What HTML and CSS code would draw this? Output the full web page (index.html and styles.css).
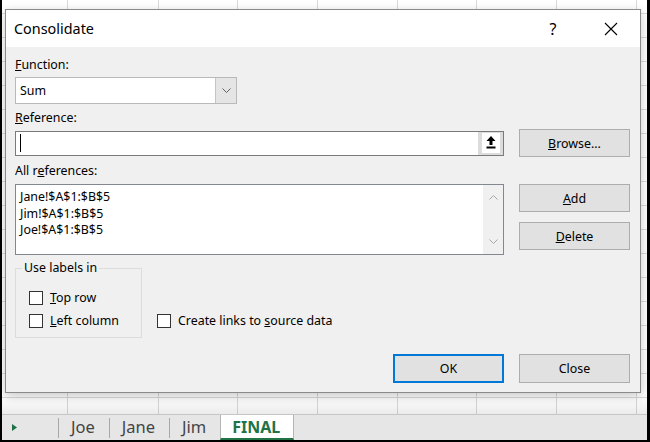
FILE: index.html
```html
<!DOCTYPE html>
<html>
<head>
<meta charset="utf-8">
<link rel="stylesheet" href="styles.css">
</head>
<body>
<div class="screen">
  <div class="sheet">
    <div class="grid">
      <div class="col w66"></div>
      <div class="col w91"></div>
      <div class="col w79"></div>
      <div class="col w80"></div>
      <div class="col w80"></div>
      <div class="col w79"></div>
      <div class="col w80"></div>
      <div class="col w80"></div>
      <div class="col rest"></div>
    </div>
    <div class="shade"></div>

    <div class="dialog">
      <div class="titlebar">
        <div class="title">Consolidate</div>
        <div class="tbtn help">?</div>
        <div class="tbtn">
          <svg width="14" height="14" viewBox="0 0 14 14"><path d="M1 1L13 13M13 1L1 13" stroke="#000" stroke-width="1.1" fill="none"/></svg>
        </div>
      </div>
      <div class="body">
        <div class="lbl"><u>F</u>unction:</div>
        <div class="combo">
          <div class="val">Sum</div>
          <div class="drop">
            <svg width="9" height="5" viewBox="0 0 9 5"><path d="M0.5 0.5L4.5 4.5L8.5 0.5" fill="none" stroke="#606060"/></svg>
          </div>
        </div>

        <div class="lbl gap6"><u>R</u>eference:</div>
        <div class="row center">
          <div class="refinput">
            <div class="field"><span class="caret"></span></div>
            <div class="collapse">
              <div class="cinner">
                <svg width="10" height="13" viewBox="0 0 10 13"><path d="M5 0L9.5 5H6.5V9H3.5V5H0.5Z" fill="#000"/><rect x="0.5" y="10.5" width="9" height="2" fill="#000"/></svg>
              </div>
            </div>
          </div>
          <div class="btn side"><span><u>B</u>rowse...</span></div>
        </div>

        <div class="lbl gap6">All r<u>e</u>ferences:</div>
        <div class="row top gap5">
          <div class="listbox">
            <div class="items">
              <div>Jane!$A$1:$B$5</div>
              <div>Jim!$A$1:$B$5</div>
              <div>Joe!$A$1:$B$5</div>
            </div>
            <div class="vscroll">
              <svg width="9" height="5" viewBox="0 0 9 5"><path d="M0.5 4.5L4.5 0.5L8.5 4.5" fill="none" stroke="#a6a6a6"/></svg>
              <svg width="9" height="5" viewBox="0 0 9 5"><path d="M0.5 0.5L4.5 4.5L8.5 0.5" fill="none" stroke="#a6a6a6"/></svg>
            </div>
          </div>
          <div class="sidecol">
            <div class="btn side"><span><u>A</u>dd</span></div>
            <div class="btn side"><span><u>D</u>elete</span></div>
          </div>
        </div>

        <div class="row bottom gap5">
          <fieldset class="group">
            <legend>Use labels in</legend>
            <div class="cb"><span class="box"></span><span><u>T</u>op row</span></div>
            <div class="cb"><span class="box"></span><span><u>L</u>eft column</span></div>
          </fieldset>
          <div class="cb links"><span class="box"></span><span>Create links to <u>s</u>ource data</span></div>
        </div>

        <div class="actions">
          <div class="btn big default"><span>OK</span></div>
          <div class="btn big"><span>Close</span></div>
        </div>
      </div>
    </div>
  </div>

  <div class="tabs">
    <div class="nav">
      <svg width="5" height="7" viewBox="0 0 5 7"><path d="M0 0L5 3.5L0 7Z" fill="#1e7145"/></svg>
    </div>
    <div class="sep"></div>
    <div class="tab">Joe</div>
    <div class="sep"></div>
    <div class="tab">Jane</div>
    <div class="sep"></div>
    <div class="tab">Jim</div>
    <div class="tab active">FINAL</div>
  </div>
</div>
</body>
</html>
```

FILE: styles.css
```css
* { box-sizing: border-box; }
html, body { margin: 0; padding: 0; }
body {
  width: 650px;
  height: 442px;
  overflow: hidden;
  font-family: "Noto Sans", "Open Sans", sans-serif;
  background: #fff;
}

.screen {
  width: 650px;
  height: 442px;
  border-left: 2px solid #000;
  border-right: 3px solid #000;
  border-bottom: 2px solid #000;
  display: flex;
  flex-direction: column;
  background: #fff;
}

.sheet {
  position: relative;
  height: 414px;
  flex: none;
  overflow: hidden;
}

.grid {
  display: flex;
  height: 100%;
  background: linear-gradient(to bottom, #dadada 0, #dadada 1px, transparent 1px) 0 13px / 100% 24px repeat;
}
.col { flex: none; border-right: 1px solid #dadada; }
.w66 { width: 66px; }
.w91 { width: 91px; }
.w79 { width: 79px; }
.w80 { width: 80px; }
.rest { flex: 1; border-right: none; }

.shade {
  position: absolute;
  left: 0; right: 0; bottom: 0;
  height: 17px;
  background: linear-gradient(to bottom, rgba(0,0,0,0), rgba(0,0,0,0.08));
}

.dialog {
  position: absolute;
  left: 3px;
  top: 9px;
  width: 636px;
  height: 384px;
  border: 1px solid #8a8a8a;
  background: #f0f0f0;
  box-shadow: 0 3px 10px rgba(0,0,0,0.22);
  display: flex;
  flex-direction: column;
  font-size: 12.4px;
  color: #000;
}

.titlebar {
  height: 37px;
  flex: none;
  background: #fff;
  display: flex;
  align-items: center;
  padding-left: 8px;
}
.title { flex: 1; font-size: 14.4px; }
.tbtn {
  width: 58px;
  height: 37px;
  display: flex;
  align-items: center;
  justify-content: center;
}
.help { font-size: 16px; }

.body {
  flex: 1;
  display: flex;
  flex-direction: column;
  padding: 10px 10px 9px 9px;
}

.lbl { height: 16px; line-height: 16px; }
.gap6 { margin-top: 6px; }
.gap5 { margin-top: 5px; }

.combo {
  margin-top: 4px;
  width: 222px;
  height: 27px;
  border: 1px solid #b9b9b9;
  background: #fff;
  display: flex;
}
.combo .val { flex: 1; padding-left: 4px; line-height: 25px; }
.combo .drop {
  width: 21px;
  background: #e5e5e5;
  border-left: 1px solid #c4c4c4;
  display: flex;
  align-items: center;
  justify-content: center;
}

.row { display: flex; gap: 15px; }
.row.center { align-items: center; margin-top: 3px; }
.row.top { align-items: flex-start; }
.row.bottom { align-items: flex-end; }

.refinput {
  width: 489px;
  height: 25px;
  border: 1px solid #7a7a7a;
  background: #fff;
  display: flex;
}
.field { flex: 1; display: flex; align-items: center; padding-left: 4px; }
.caret { width: 1px; height: 18px; background: #000; }
.collapse {
  width: 25px;
  background: #dcdcdc;
  padding: 1px 3px 2px 4px;
}
.cinner {
  width: 100%;
  height: 100%;
  background: #fff;
  display: flex;
  align-items: center;
  justify-content: center;
}

.btn {
  width: 111px;
  background: #e1e1e1;
  border: 1px solid #adadad;
  display: flex;
  align-items: center;
  justify-content: center;
  flex: none;
}
.btn.side { height: 28px; }
.btn.big { height: 29px; }
.btn.default { border: 2px solid #0078d7; }

.listbox {
  width: 489px;
  height: 71px;
  border: 1px solid #828790;
  background: #fff;
  display: flex;
  flex: none;
}
.items { flex: 1; padding: 4px 4px; line-height: 16.5px; }
.vscroll {
  width: 20px;
  background: #f0f0f0;
  display: flex;
  flex-direction: column;
  justify-content: space-between;
  align-items: center;
  padding: 10px 0 10px;
}
.sidecol { display: flex; flex-direction: column; gap: 10px; }

.group {
  margin: 0;
  width: 127px;
  border: 1px solid #dcdcdc;
  padding: 10px 0 5px 6px;
}
.group legend {
  padding: 0 2px;
  line-height: 16px;
}
.cb {
  display: flex;
  align-items: center;
  gap: 7px;
  height: 23px;
}
.group .cb { margin-left: 7px; }
.box {
  width: 14px;
  height: 14px;
  border: 1px solid #333;
  background: #fff;
  flex: none;
}
.cb.links { margin-bottom: 6px; }

.actions {
  margin-top: auto;
  display: flex;
  justify-content: flex-end;
  gap: 15px;
}

.tabs {
  height: 26px;
  flex: none;
  background: #e6e6e6;
  border-top: 1px solid #c6c6c6;
  display: flex;
  font-size: 16.5px;
  line-height: 20px;
  color: #444;
}
.nav {
  width: 56px;
  display: flex;
  align-items: center;
  padding-left: 10px;
}
.sep { width: 1px; background: #a8a8a8; margin: 3px 0 2px; }
.tab {
  display: flex;
  align-items: center;
  padding: 0 14px 2px 12px;
}
.tab.active {
  padding: 0 13px 0 11px;
  background: #fff;
  color: #217346;
  font-weight: bold;
  font-size: 16px;
  border-left: 1px solid #b5b5b5;
  border-right: 1px solid #b5b5b5;
  border-bottom: 2px solid #217346;
}
```
